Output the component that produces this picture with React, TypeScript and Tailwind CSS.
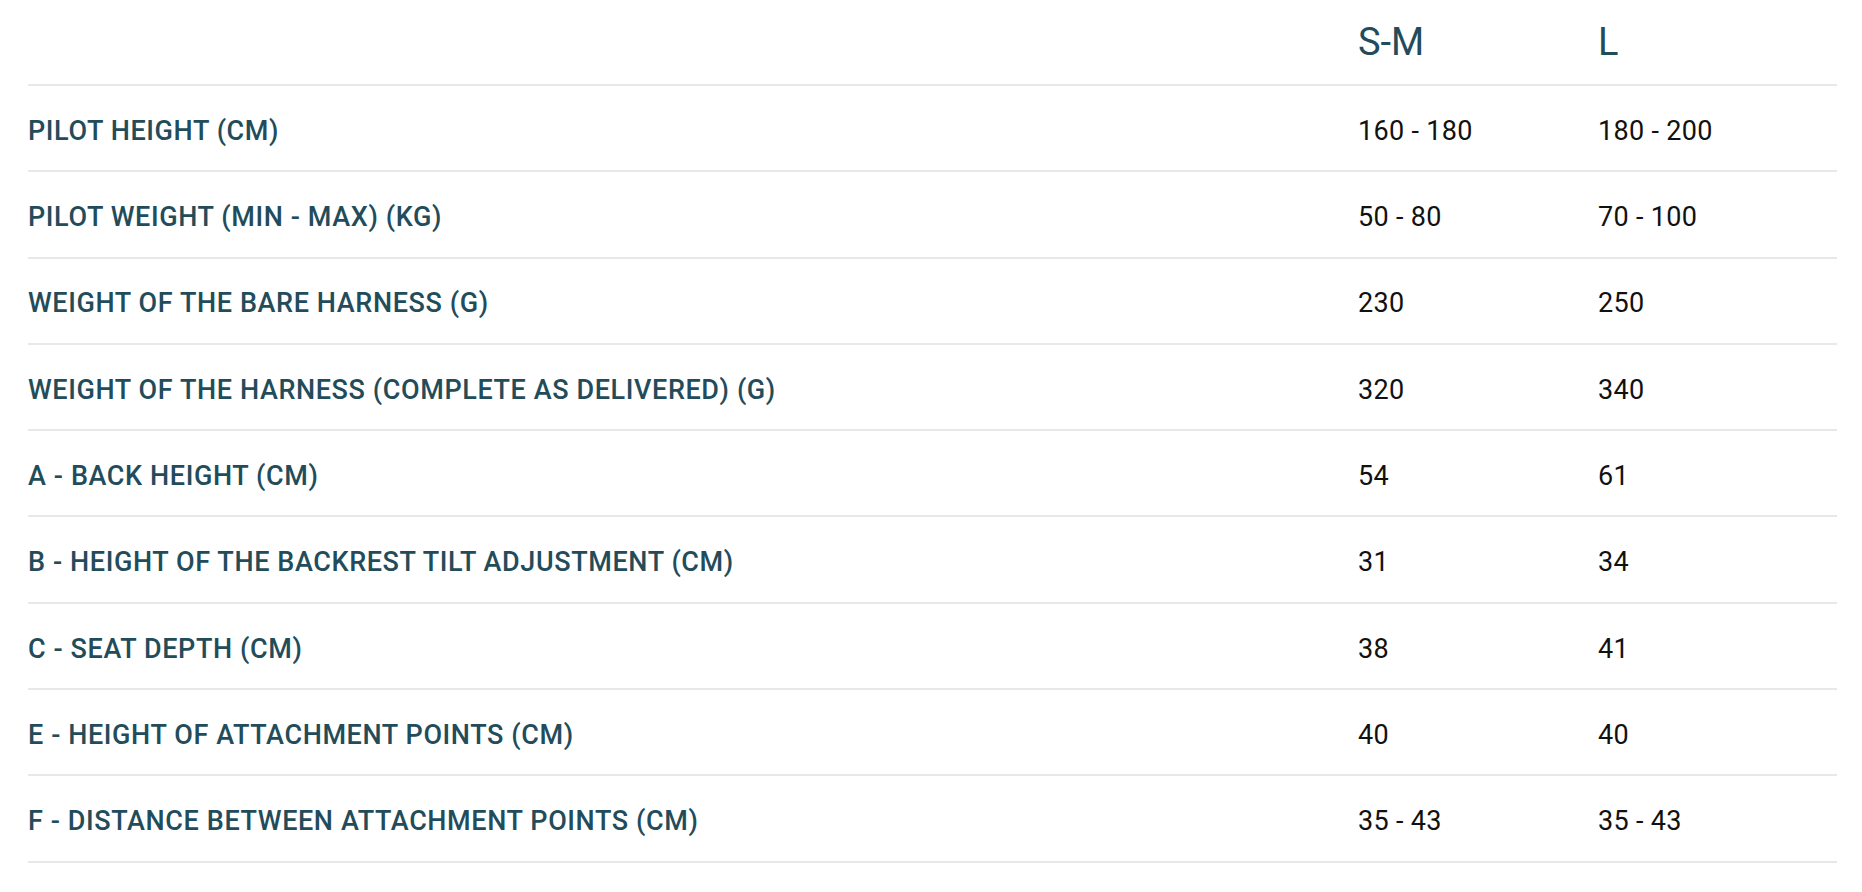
const rows = [
  { label: 'PILOT HEIGHT (CM)', sm: '160 - 180', l: '180 - 200' },
  { label: 'PILOT WEIGHT (MIN - MAX) (KG)', sm: '50 - 80', l: '70 - 100' },
  { label: 'WEIGHT OF THE BARE HARNESS (G)', sm: '230', l: '250' },
  { label: 'WEIGHT OF THE HARNESS (COMPLETE AS DELIVERED) (G)', sm: '320', l: '340' },
  { label: 'A - BACK HEIGHT (CM)', sm: '54', l: '61' },
  { label: 'B - HEIGHT OF THE BACKREST TILT ADJUSTMENT (CM)', sm: '31', l: '34' },
  { label: 'C - SEAT DEPTH (CM)', sm: '38', l: '41' },
  { label: 'E - HEIGHT OF ATTACHMENT POINTS (CM)', sm: '40', l: '40' },
  { label: 'F - DISTANCE BETWEEN ATTACHMENT POINTS (CM)', sm: '35 - 43', l: '35 - 43' },
];

export default function App() {
  return (
    <div className="min-h-screen bg-white font-['Roboto',sans-serif]">
      <div className="pl-[28px] pr-[25px]">
        {/* Size header */}
        <div className="grid h-[86px] grid-cols-[1fr_240px_239px] items-center border-b-2 border-[#e8e8e8]">
          <div />
          <div className="pt-[1px] text-[38px] font-normal text-[#234c5b]">S-M</div>
          <div className="pt-[1px] text-[38px] font-normal text-[#234c5b]">L</div>
        </div>

        {/* Spec rows */}
        {rows.map((row) => (
          <div
            key={row.label}
            className="grid h-[86.3px] grid-cols-[1fr_240px_239px] items-center border-b-2 border-[#e8e8e8] pt-[6px]"
          >
            <div className="text-[27px] font-medium tracking-[0.6px] text-[#234c5b]">{row.label}</div>
            <div className="text-[27px] tracking-[0.3px] text-[#111111]">{row.sm}</div>
            <div className="text-[27px] tracking-[0.3px] text-[#111111]">{row.l}</div>
          </div>
        ))}
      </div>
    </div>
  );
}
